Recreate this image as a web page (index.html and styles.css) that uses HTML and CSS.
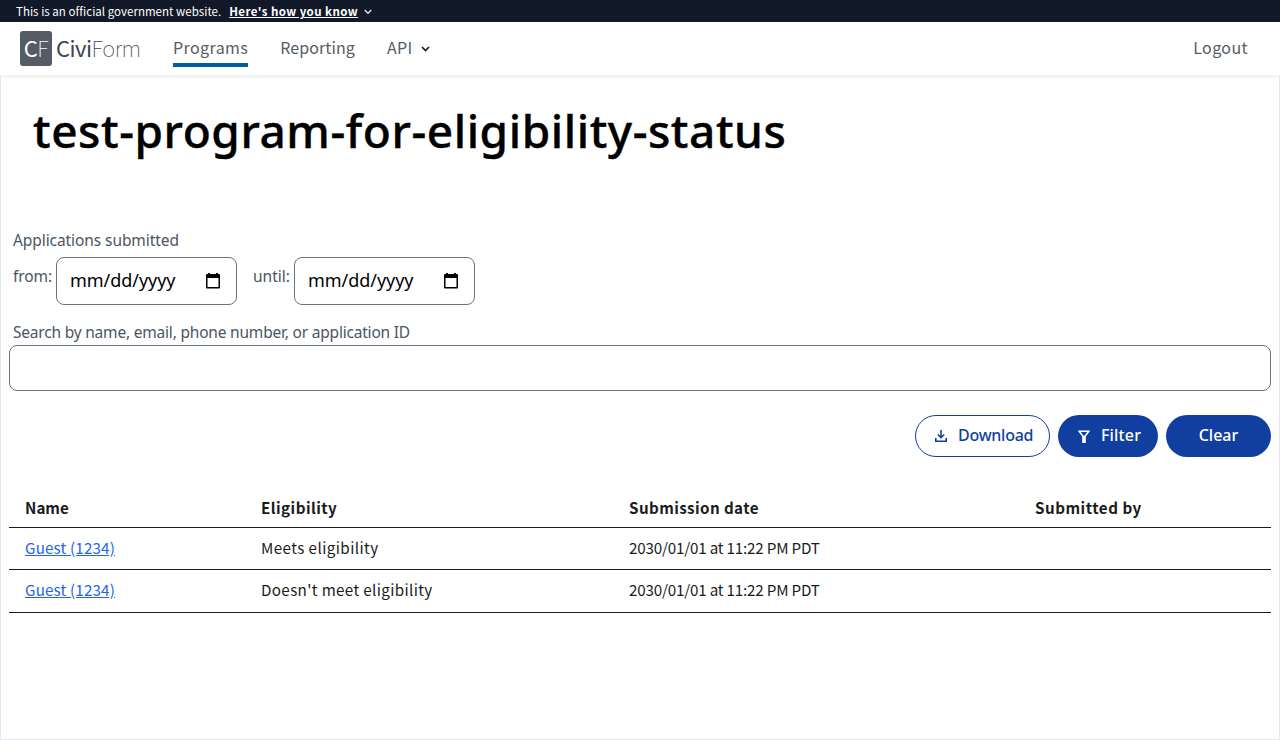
FILE: index.html
```
<!DOCTYPE html>
<html lang="en">
<head>
<meta charset="utf-8">
<title>test-program-for-eligibility-status</title>
<link rel="stylesheet" href="styles.css">
</head>
<body>
<div class="banner">
  <span class="banner-text">This is an official government website.</span>
  <a class="banner-link">Here's how you know</a>
  <svg class="banner-chevron" width="8" height="6" viewBox="0 0 8 6"><path d="M.7 1 4 4.3 7.3 1" fill="none" stroke="#dfe1e2" stroke-width="1.4"/></svg>
</div>
<header class="header">
  <div class="logo"><span class="logo-mark">C<span class="thin">F</span></span><span class="logo-name">Civi<span class="thin">Form</span></span></div>
  <nav class="nav">
    <a class="nav-link current">Programs</a>
    <a class="nav-link reporting">Reporting</a>
    <a class="nav-link api">API</a>
    <svg class="nav-chevron" width="9" height="6" viewBox="0 0 9 6"><path d="M1 1 4.5 4.5 8 1" fill="none" stroke="#1b1b1b" stroke-width="1.7"/></svg>
  </nav>
  <a class="nav-link logout">Logout</a>
</header>
<main class="main">
  <h1 class="title">test-program-for-eligibility-status</h1>
  <form class="filters">
    <div class="label submitted">Applications submitted</div>
    <div class="dates">
      <span class="label from">from:</span>
      <span class="date"><span class="date-text">mm/dd/yyyy</span><svg width="14" height="16" viewBox="0 0 14 16"><path d="M2 0h2v1h6V0h2v1h1q1 0 1 1v12.5q0 1-1 1H1q-1 0-1-1V2q0-1 1-1h1zM1.5 5v9h11V5z" fill="#000" fill-rule="evenodd"/></svg></span>
      <span class="label until">until:</span>
      <span class="date"><span class="date-text">mm/dd/yyyy</span><svg width="14" height="16" viewBox="0 0 14 16"><path d="M2 0h2v1h6V0h2v1h1q1 0 1 1v12.5q0 1-1 1H1q-1 0-1-1V2q0-1 1-1h1zM1.5 5v9h11V5z" fill="#000" fill-rule="evenodd"/></svg></span>
    </div>
    <div class="label search-label">Search by name, email, phone number, or application ID</div>
    <div class="search"></div>
    <div class="actions">
      <span class="btn outline"><svg width="12" height="12" viewBox="0 0 12 12"><path d="M6 0v7.5M2.8 4.5 6 7.7l3.2-3.2M.8 8v3.2h10.4V8" fill="none" stroke="#113f9f" stroke-width="1.6"/></svg><span class="t-download">Download</span></span>
      <span class="btn filter"><svg width="12" height="13" viewBox="0 0 12 13"><path d="M1.2 1.3h9.6L7 6.2v6H5v-6z" fill="none" stroke="#fff" stroke-width="1.6"/><path d="M5 6h2v6H5z" fill="#fff"/></svg><span class="t-filter">Filter</span></span>
      <span class="btn clear"><span class="t-clear">Clear</span></span>
    </div>
  </form>
  <table class="table">
    <thead><tr><th class="c1"><span class="h-name">Name</span></th><th class="c2"><span class="h-elig">Eligibility</span></th><th class="c3"><span class="h-date">Submission date</span></th><th class="c4"><span class="h-by">Submitted by</span></th></tr></thead>
    <tbody>
      <tr><td><a class="guest">Guest (1234)</a></td><td><span class="meets">Meets eligibility</span></td><td><span class="time">2030/01/01 at 11:22 PM PDT</span></td><td></td></tr>
      <tr class="last"><td><a class="guest">Guest (1234)</a></td><td><span class="doesnt">Doesn't meet eligibility</span></td><td><span class="time">2030/01/01 at 11:22 PM PDT</span></td><td></td></tr>
    </tbody>
  </table>
</main>
</body>
</html>
```
FILE: styles.css
```
* { box-sizing: border-box; }
body { margin: 0; height: 740px; overflow: hidden; display: flex; flex-direction: column; background: #fff; font-family: "Noto Sans CJK JP", sans-serif; color: #1b1b1b; white-space: nowrap; }
svg { display: block; flex: none; }
.banner { height: 22px; flex: none; background: #111827; color: #fff; display: flex; align-items: center; padding-left: 16px; font-size: 11.5px; line-height: 22px; }
.banner-text { letter-spacing: .03px; }
.banner-link { font-weight: 700; text-decoration: underline; margin-left: 8px; letter-spacing: .43px; }
.banner-chevron { margin: 2px 0 0 6px; }
.header { height: 53px; flex: none; display: flex; padding: 0 32px 0 20px; background: #fff; box-shadow: 0 3px 4px -1px rgba(0,0,0,.08); position: relative; z-index: 1; }
.logo { display: flex; align-items: center; width: 153px; font-size: 22px; line-height: 32px; color: #3d4551; letter-spacing: -.5px; }
.logo-mark { width: 32px; height: 35px; border-radius: 3px; background: #565c65; color: #fff; text-align: center; margin-right: 4px; }
.logo-name { padding-bottom: 3px; }
.thin { font-weight: 100; }
.nav { display: flex; flex: 1; }
.nav-link { height: 45px; line-height: 51px; font-size: 16px; color: #565c65; letter-spacing: .4px; }
.current { border-bottom: 4px solid #005ea2; margin-right: 32px; }
.reporting { margin-right: 32px; letter-spacing: .1px; }
.nav-chevron { margin: 24px 0 0 8px; }
.main { flex: 1; border: 1px solid #e5e7eb; border-top-color: transparent; padding: 0 8px; }
.title { font: 500 46px/60px "Noto Sans", sans-serif; color: #000; margin: 24px 0 0 24px; letter-spacing: .55px; -webkit-text-stroke: .4px #000; }
.filters { margin: 0; }
.label { font: 15.5px/24px "Noto Sans", sans-serif; color: #4b5563; }
.submitted { margin: 68px 0 5px 4px; letter-spacing: -.08px; }
.dates { display: flex; padding-left: 4px; height: 48px; }
.from { width: 43px; padding-top: 7px; letter-spacing: -.1px; }
.until { width: 41px; padding-top: 7px; margin-left: 16px; }
.date { width: 181px; height: 48px; border: 1px solid #6b7280; border-radius: 8px; display: flex; align-items: center; justify-content: space-between; padding: 0 16px 0 13px; font: 18px/24px "Noto Sans", sans-serif; color: #000; }
.date-text { letter-spacing: -.05px; padding-bottom: 2px; }
.search-label { margin: 15px 0 1px 4px; letter-spacing: -.2px; }
.search { height: 46px; border: 1px solid #6b7280; border-radius: 8px; }
.actions { display: flex; justify-content: flex-end; gap: 8px; margin-top: 24px; }
.btn { height: 42px; border-radius: 21px; display: flex; align-items: center; background: #113f9f; color: #fff; font: 500 16px/24px "Noto Sans", sans-serif; }
.btn span { padding-bottom: 2px; }
.outline { width: 135px; background: #fff; color: #113f9f; border: 1px solid #113f9f; padding-left: 19px; gap: 11px; }
.t-download { letter-spacing: -.25px; }
.filter { width: 100px; padding-left: 20px; gap: 11px; }
.filter svg { margin-top: 1px; }
.t-filter { letter-spacing: .15px; }
.clear { width: 105px; justify-content: center; }
.table { width: 100%; table-layout: fixed; border-collapse: collapse; margin-top: 32px; font-size: 15.2px; line-height: 20px; }
.table th, .table td { text-align: left; padding: 0 0 2px 16px; border-bottom: 1px solid #1b1b1b; height: 42px; }
.table th { height: 38px; font-weight: 700; }
.table .last td { height: 43px; padding-bottom: 3px; }
.c1 { width: 236px; }
.c2 { width: 368px; }
.c3 { width: 406px; }
.guest { color: #2563eb; text-decoration: underline; letter-spacing: .17px; }
.h-elig { letter-spacing: .45px; }
.h-date { letter-spacing: .4px; }
.h-by { letter-spacing: .5px; }
.meets { letter-spacing: .42px; }
.doesnt { letter-spacing: .36px; }
.time { letter-spacing: -.19px; }
```
